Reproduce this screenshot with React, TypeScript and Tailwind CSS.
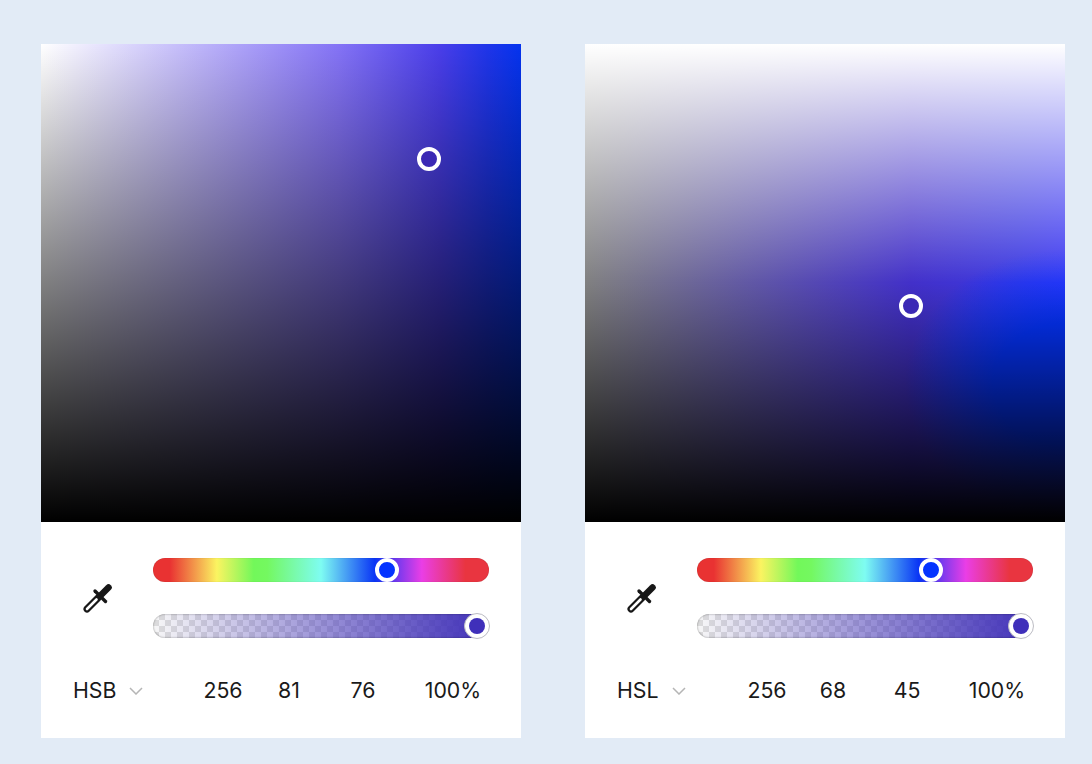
function Eyedropper() {
  return (
    <svg width="30" height="30" viewBox="0 0 30 30" fill="none" className="shrink-0">
      <path d="M17 13L25.5 4.5" stroke="#171717" strokeWidth="6.5" strokeLinecap="round" />
      <path d="M12 8L22.5 18.5" stroke="#171717" strokeWidth="3.4" strokeLinecap="round" />
      <path d="M15 15L4 26" stroke="#171717" strokeWidth="7" strokeLinecap="round" />
      <path d="M13.5 16.5L4 26" stroke="#fff" strokeWidth="2.6" strokeLinecap="round" />
    </svg>
  );
}

function Chevron() {
  return (
    <svg width="14" height="8" viewBox="0 0 14 8" fill="none" className="ml-[13px] mt-px">
      <path d="M1 1L7 7L13 1" stroke="#b5b5b5" strokeWidth="1.5" />
    </svg>
  );
}

function Thumb({ className }: { className: string }) {
  return <div className={`absolute h-6 w-6 rounded-full border-4 border-white ${className}`} />;
}

function Picker({
  mode,
  values,
  fieldClass,
  thumbClass,
}: {
  mode: string;
  values: string[];
  fieldClass: string;
  thumbClass: string;
}) {
  return (
    <div className="flex w-[480px] flex-col bg-white">
      <div className={`relative h-[478px] ${fieldClass}`}>
        <Thumb className={`bg-[#3b29b5] ${thumbClass}`} />
      </div>
      <div className="flex h-[216px] flex-col px-8 pt-9">
        <div className="flex items-center">
          <div className="flex w-20 items-center pl-2.5">
            <Eyedropper />
          </div>
          <div className="flex w-[336px] flex-col gap-8">
            <div className="relative h-6 rounded-full bg-[linear-gradient(to_right,#e93232_5%,#fbf461_19%,#72f85a_30%,#74f860_34%,#7efcf2_50%,#0a35f5_66%,#ea3ee6_80%,#e93540_93%)] shadow-[inset_0_0_1px_rgba(0,0,0,0.3)]">
              <Thumb className="left-[222px] top-0 bg-[#0433ff]" />
            </div>
            <div className="relative h-6 rounded-full bg-[repeating-conic-gradient(#dcdcdc_0_25%,#f7f7f7_0_50%)] bg-[length:12px_12px]">
              <div className="absolute inset-0 rounded-full bg-[linear-gradient(to_right,rgba(64,48,184,0)_0%,#4030b8_100%)] shadow-[inset_0_0_2px_rgba(0,0,0,0.45)]" />
              <div className="absolute left-[311px] top-[-1px] h-[26px] w-[26px] rounded-full border border-[#bdbdc4] bg-white p-[4px]">
                <div className="h-full w-full rounded-full bg-[#3f2fba]" />
              </div>
            </div>
          </div>
        </div>
        <div className="mt-[40px] flex items-center text-[21.3px] leading-[24px] text-[#1a1a1a] [font-family:Inter,'Liberation_Sans',sans-serif]">
          <div className="flex w-[120px] items-center">
            <span>{mode}</span>
            <Chevron />
          </div>
          <span className="w-[60px] text-center">{values[0]}</span>
          <span className="w-[72px] text-center">{values[1]}</span>
          <span className="w-[76px] text-center">{values[2]}</span>
          <span className="w-[88px] pl-[16px] text-center">{values[3]}</span>
        </div>
      </div>
    </div>
  );
}

export default function App() {
  return (
    <div className="flex min-h-[764px] items-start gap-16 bg-[#e2ebf6] pl-[41px] pt-[44px]">
      <Picker
        mode="HSB"
        values={["256", "81", "76", "100%"]}
        fieldClass="bg-[linear-gradient(to_bottom,rgba(0,0,0,0),#000000),linear-gradient(to_right,#ffffff,#8473f6_62%,#4a3eea_83%,#1f35ea_93%,#0433ef)]"
        thumbClass="left-[376px] top-[103px]"
      />
      <Picker
        mode="HSL"
        values={["256", "68", "45", "100%"]}
        fieldClass="bg-[linear-gradient(to_bottom,#ffffff,rgba(255,255,255,0)_50%,rgba(0,0,0,0)_50%,#000000),radial-gradient(ellipse_160px_135px_at_100%_340px,#0433ff_45%,rgba(4,51,255,0)_100%),linear-gradient(to_right,#808080,#4230c9_68%,#3b38e0_90%,#3c38f0)]"
        thumbClass="left-[314px] top-[250px]"
      />
    </div>
  );
}
